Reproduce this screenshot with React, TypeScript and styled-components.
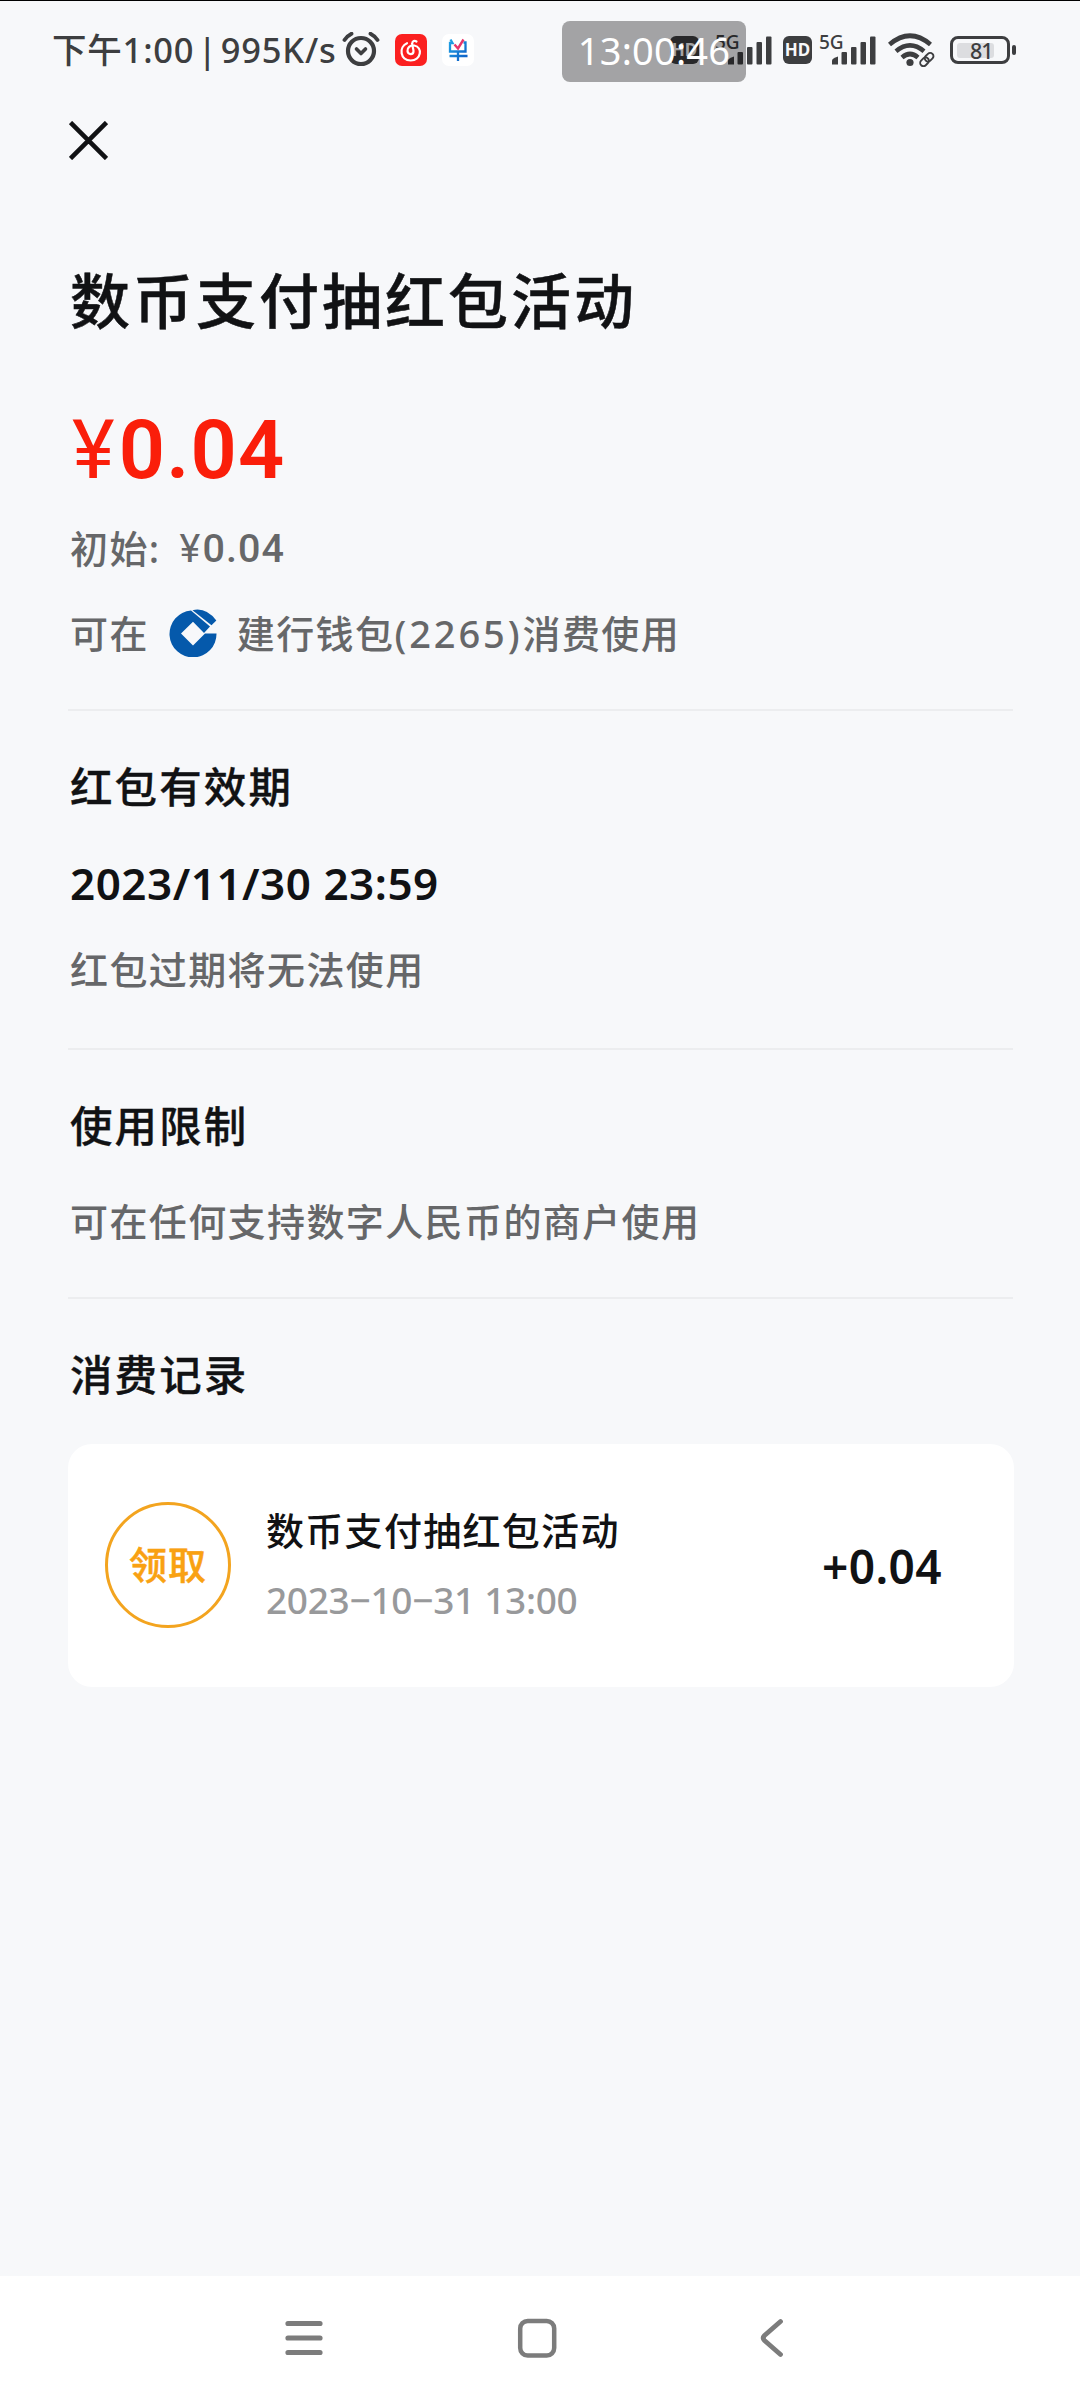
import React from "react";
import styled, { createGlobalStyle } from "styled-components";

const CJK = `"Noto Sans", "Noto Sans CJK SC", sans-serif`;

const Global = createGlobalStyle`
  html, body { margin: 0; padding: 0; background: #f7f8fa; }
  *, *::before, *::after { box-sizing: border-box; }
`;

const Screen = styled.div`
  width: 1080px;
  height: 2400px;
  display: flex;
  flex-direction: column;
  overflow: hidden;
  background: #f7f8fa;
  border-top: 1px solid #000;
  font-family: ${CJK};
  color: #111214;
`;

const StatusBar = styled.header`
  position: relative;
  height: 98px;
  display: flex;
  align-items: center;
  padding: 0 64px 0 52px;
  color: #3d3e40;
`;

const Clock = styled.span`
  width: 290px;
  white-space: nowrap;
  font-size: 34.5px;
  font-weight: 500;
  line-height: 60px;
  letter-spacing: 0.8px;
  word-spacing: -6.5px;
`;

const AppIcons = styled.div`
  display: flex;
  gap: 15px;
  align-items: center;
  svg { display: block; }
`;

const Radios = styled.div`
  margin-left: auto;
  display: flex;
  align-items: center;
`;

const HdBadge = styled.span`
  width: 29px;
  height: 28px;
  border-radius: 6px;
  background: #3d3e40;
  color: #f7f8fa;
  font: 700 17px/28px "Noto Sans", sans-serif;
  text-align: center;
`;

const Network = styled.div<{ $gap: number; $end: number }>`
  display: flex;
  align-items: flex-end;
  height: 30px;
  margin-left: ${(p) => p.$gap}px;
  margin-right: ${(p) => p.$end}px;
`;

const NetLabel = styled.span`
  width: 13px;
  height: 30px;
  white-space: nowrap;
  font: 500 19px/14px "Noto Sans", sans-serif;
`;

const Battery = styled.div`
  display: flex;
  align-items: center;
  gap: 2px;
  margin-left: 14px;
  &::after {
    content: "";
    width: 4px;
    height: 10px;
    border-radius: 2px;
    background: #3d3e40;
  }
`;

const BatteryShell = styled.div`
  width: 60px;
  height: 28px;
  padding: 3.5px 4px;
  border: 3px solid #3d3e40;
  border-radius: 8px;
`;

const BatteryFill = styled.div`
  width: 81%;
  height: 100%;
  border-radius: 3px;
  background: #dcdde0;
  font: 500 21.5px/15px "Noto Sans", sans-serif;
  letter-spacing: -1px;
  padding-left: 13px;
`;

const TimeOverlay = styled.div`
  position: absolute;
  left: 562px;
  top: 20px;
  width: 184px;
  height: 61px;
  border-radius: 8px;
  background: rgba(0, 0, 0, 0.34);
  color: #fff;
  text-align: center;
  white-space: nowrap;
  font: 400 38px/59px "Noto Sans", sans-serif;
  letter-spacing: 0.2px;
`;

const TitleBar = styled.div`
  height: 84px;
  padding: 22px 0 0 69px;
  svg { display: block; }
`;

const Content = styled.main`
  flex: 1;
  padding: 80px 67px 0 68px;
`;

const Title = styled.h1`
  margin: 0 0 0 2px;
  font-size: 60px;
  line-height: 76px;
  letter-spacing: 3px;
  font-weight: 500;
  -webkit-text-stroke: 0.5px currentColor;
`;

const Amount = styled.div`
  margin: 66px 0 0 4px;
  height: 92px;
  font: 600 81px/92px Roboto, sans-serif;
  letter-spacing: 1.2px;
  color: #fa1e0a;
`;

const Yen = styled.span<{ $gap: number }>`
  margin-right: ${(p) => p.$gap}px;
  font-family: Roboto, sans-serif;
  font-weight: 400;
`;

const Note = styled.p<{ $top: number }>`
  display: flex;
  align-items: center;
  margin: ${(p) => p.$top}px 0 0 2px;
  height: 48px;
  font-size: 38px;
  font-weight: 500;
  line-height: 48px;
  letter-spacing: 1.4px;
  color: #666769;
  white-space: pre;
`;

const Initial = styled.span`
  margin-left: 19px;
  padding-top: 1px;
  font: 500 39.5px/48px Roboto, sans-serif;
  letter-spacing: 1.1px;
`;

const WalletNumber = styled.span`
  letter-spacing: 2.9px;
`;

const WalletIcon = styled.svg`
  display: block;
  margin: 0 20px 0 20px;
`;

const Section = styled.section<{ $top: number }>`
  margin-top: ${(p) => p.$top}px;
  border-top: 2px solid #ecedef;
  padding-top: 49px;
`;

const Heading = styled.h2`
  margin: 0 0 0 2px;
  font-size: 42.5px;
  line-height: 54px;
  letter-spacing: 2.1px;
  font-weight: 500;
  -webkit-text-stroke: 0.3px currentColor;
`;

const Deadline = styled.div`
  margin: 42px 0 0 2px;
  height: 54px;
  font-size: 44px;
  line-height: 54px;
  letter-spacing: 0.5px;
  font-weight: 600;
`;

const RecordCard = styled.article`
  display: flex;
  align-items: center;
  margin-top: 42px;
  width: 946px;
  height: 243px;
  padding: 0 72px 0 37px;
  border-radius: 24px;
  background: #fff;
`;

const Claim = styled.div`
  flex: none;
  width: 126px;
  height: 126px;
  margin-bottom: 2px;
  border: 3px solid #f3a41f;
  border-radius: 50%;
  color: #f9a112;
  font-size: 38px;
  line-height: 119px;
  letter-spacing: 1px;
  text-align: center;
  font-weight: 500;
  -webkit-text-stroke: 0.5px currentColor;
`;

const RecordText = styled.div`
  flex: 1;
  margin: 0 0 2px 35px;
`;

const RecordTitle = styled.div`
  font-size: 38px;
  line-height: 50px;
  letter-spacing: 1.3px;
  font-weight: 500;
`;

const RecordTime = styled.div`
  margin-top: 21px;
  font-size: 37px;
  font-weight: 500;
  line-height: 48px;
  letter-spacing: -0.3px;
  color: #98999b;
`;

const RecordAmount = styled.div`
  margin-top: 1px;
  font-size: 46px;
  font-weight: 600;
  line-height: 56px;
  letter-spacing: 0.4px;
`;

const NavBar = styled.nav`
  display: flex;
  align-items: center;
  justify-content: center;
  gap: 194px;
  height: 124px;
  padding-right: 7px;
  background: #fff;
  svg { display: block; }
`;

function SignalBars() {
  return (
    <svg width="44" height="29" viewBox="0 0 44 29" fill="#3d3e40">
      <path d="M0 28.500v-4q0-2 6-4v8z" />
      <rect x="9.500" y="16" width="5.500" height="12.500" rx="1" />
      <rect x="19" y="11" width="5.500" height="17.500" rx="1" />
      <rect x="28.500" y="6" width="5.500" height="22.500" rx="1" />
      <rect x="38" y="0.500" width="5.500" height="28" rx="1" />
    </svg>
  );
}

function AlarmIcon() {
  return (
    <svg width="38" height="36" viewBox="0 0 38 36" fill="none" stroke="#3d3e40" strokeLinecap="round" strokeLinejoin="round">
      <circle cx="19" cy="19" r="13" strokeWidth="4.200" />
      <path d="M14.500 17l4.500 4.500 4.500-4.500" strokeWidth="3.600" />
      <path d="M2.500 8q2.500-4 7-6.300M35.500 8q-2.500-4-7-6.300" strokeWidth="3.800" />
    </svg>
  );
}

function MusicIcon() {
  return (
    <svg width="32" height="32" viewBox="0 0 32 32" fill="none">
      <rect width="32" height="32" rx="7" fill="#fb2020" />
      <path
        d="M12 9.200C3.500 13 5 26.500 15.700 26.500c10.500 0 12.500-13.500 3.500-15-4-.6-7.200 2.200-6.700 5.700.5 3.800 6 3.800 6 0 0-2-1.500-6-1.300-7.700.2-2.500 2.300-3.300 4.300-2"
        stroke="#fff"
        strokeWidth="2.200"
        strokeLinecap="round"
      />
    </svg>
  );
}

function EcnyIcon() {
  return (
    <svg width="32" height="32" viewBox="0 0 32 32" fill="none">
      <defs>
        <linearGradient id="ecny" x1="0" y1="0" x2="1" y2="1">
          <stop offset="0" stopColor="#22a5e6" />
          <stop offset="1" stopColor="#0b58c4" />
        </linearGradient>
      </defs>
      <rect width="32" height="32" rx="7" fill="#fff" />
      <path
        d="M8.500 5.500l2 3.500H8v8.500h15.500V8.500h-2M7.500 22h18M16 17.500V27"
        stroke="url(#ecny)"
        strokeWidth="2.300"
      />
      <path d="M12.500 10.500l3.500 4 5.500-9" stroke="#e8356b" strokeWidth="2.400" />
    </svg>
  );
}

function WifiIcon() {
  return (
    <svg width="48" height="34" viewBox="0 0 48 34" fill="none" stroke="#3d3e40">
      <path d="M1.500 11.500Q22-6 42.500 11.500" strokeWidth="4.600" />
      <path d="M8 18.200Q22 6.500 36 18.200" strokeWidth="4.600" />
      <path d="M14 24.500Q22 17.500 30 24.500" strokeWidth="4.600" />
      <circle cx="22" cy="29.500" r="3.600" fill="#3d3e40" stroke="none" />
      <g strokeWidth="1.900" transform="rotate(-45 39 26)">
        <rect x="30.500" y="23" width="9.500" height="6.500" rx="3.200" />
        <rect x="37" y="23" width="9.500" height="6.500" rx="3.200" />
      </g>
    </svg>
  );
}

export default function App() {
  return (
    <Screen>
      <Global />
      <StatusBar>
        <Clock>下午1:00 | 995K/s</Clock>
        <AppIcons>
          <AlarmIcon />
          <MusicIcon />
          <EcnyIcon />
        </AppIcons>
        <Radios>
          <HdBadge>HD</HdBadge>
          <Network $gap={16} $end={11}>
            <NetLabel>5G</NetLabel>
            <SignalBars />
          </Network>
          <HdBadge>HD</HdBadge>
          <Network $gap={7} $end={12}>
            <NetLabel>5G</NetLabel>
            <SignalBars />
          </Network>
          <WifiIcon />
          <Battery>
            <BatteryShell>
              <BatteryFill>81</BatteryFill>
            </BatteryShell>
          </Battery>
        </Radios>
        <TimeOverlay>13:00:46</TimeOverlay>
      </StatusBar>
      <TitleBar>
        <svg width="39" height="39" viewBox="0 0 39 39" stroke="#111214" strokeWidth="4.600">
          <path d="M1.500 1.500l36 36M37.500 1.500l-36 36" />
        </svg>
      </TitleBar>
      <Content>
        <Title>数币支付抽红包活动</Title>
        <Amount>
          <Yen $gap={3}>¥</Yen>0.04
        </Amount>
        <Note $top={27}>
          初始:
          <Initial>
            <Yen $gap={1}>¥</Yen>0.04
          </Initial>
        </Note>
        <Note $top={37}>
          可在
          <WalletIcon width="48" height="48" viewBox="0 0 48 48">
            <path
              d="M22 1.500A23.500 23.500 0 1 0 47.500 24.500H36L24 36.500 12 24.500 24 12.800 35 24l6-6.500z"
              fill="#0559ab"
            />
            <path d="M23.500 1.200Q37-2 47.300 11.500l-4.800 4.800z" fill="#0559ab" />
          </WalletIcon>
          建行钱包<WalletNumber>(2265)</WalletNumber>消费使用
        </Note>
        <Section $top={52}>
          <Heading>红包有效期</Heading>
          <Deadline>2023/11/30 23:59</Deadline>
          <Note $top={35}>红包过期将无法使用</Note>
        </Section>
        <Section $top={55}>
          <Heading>使用限制</Heading>
          <Note $top={44}>可在任何支持数字人民币的商户使用</Note>
        </Section>
        <Section $top={52}>
          <Heading>消费记录</Heading>
          <RecordCard>
            <Claim>领取</Claim>
            <RecordText>
              <RecordTitle>数币支付抽红包活动</RecordTitle>
              <RecordTime>2023−10−31 13:00</RecordTime>
            </RecordText>
            <RecordAmount>+0.04</RecordAmount>
          </RecordCard>
        </Section>
      </Content>
      <NavBar>
        <svg width="38" height="40" viewBox="0 0 38 40" stroke="#7c7c7c" strokeWidth="5.200" strokeLinecap="round">
          <path d="M3 5.500h32M3 20h32M3 34.500h32" />
        </svg>
        <svg width="40" height="40" viewBox="0 0 40 40" fill="none" stroke="#7c7c7c" strokeWidth="4.500">
          <rect x="3.200" y="3" width="34" height="34.500" rx="7.500" />
        </svg>
        <svg width="38" height="40" viewBox="0 0 38 40" fill="none" stroke="#7c7c7c" strokeWidth="4.800" strokeLinecap="round">
          <path d="M29.500 3.500L13.500 17.500q-2.500 2.500 0 5L29.500 36.500" />
        </svg>
      </NavBar>
    </Screen>
  );
}
